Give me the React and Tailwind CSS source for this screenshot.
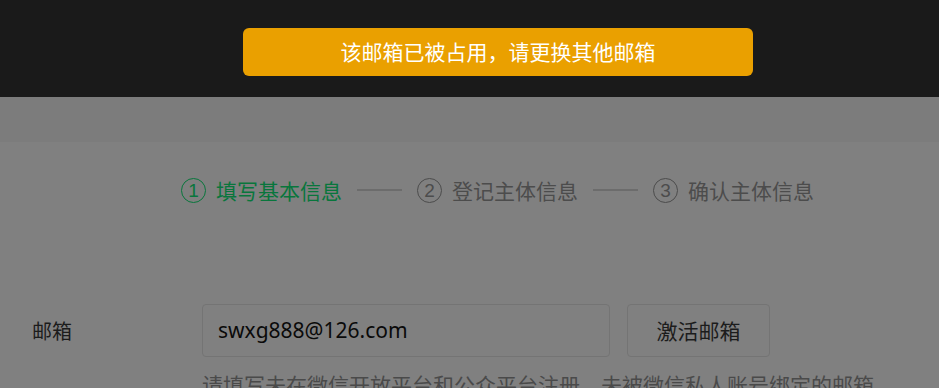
import React from "react";

const cjk = { fontFamily: '"Noto Sans CJK SC", "Noto Sans", sans-serif' };

function Step({ n, label, active }) {
  const color = active ? "text-[#08763c]" : "text-[#4c4c4c]";
  const border = active ? "border-[#08763c]" : "border-[#4c4c4c]";
  return (
    <div className={`flex items-center gap-[10px] ${color}`}>
      <div className={`w-[25px] h-[25px] rounded-full border ${border} flex items-center justify-center text-[19px] leading-none`} style={{ fontFamily: '"Liberation Sans", sans-serif' }}>
        {n}
      </div>
      <span className="text-[21px] leading-none">{label}</span>
    </div>
  );
}

function Line() {
  return <div className="w-[45px] h-[2px] bg-[#6c6c6c] mx-[15px]" />;
}

export default function App() {
  return (
    <div className="relative w-[939px] h-[388px] overflow-hidden bg-[#808080]" style={cjk}>
      <div className="h-[97px] bg-[#1a1a1a]" />
      <div className="h-[45px] bg-[#7c7c7c]" />
      <div className="pt-[18px] pl-[181px] flex items-center h-[60px] box-content">
        <Step n="1" label="填写基本信息" active />
        <Line />
        <Step n="2" label="登记主体信息" />
        <Line />
        <Step n="3" label="确认主体信息" />
      </div>
      <div className="mt-[84px] flex items-start">
        <div className="w-[202px] pl-[32px] h-[53px] flex items-center text-[20px] text-[#1c1c1c]">邮箱</div>
        <div>
          <div className="flex gap-[17px]">
            <div className="w-[408px] h-[53px] rounded-[4px] border border-[#747474] flex items-center pl-[15px] text-[21px] text-[#0a0a0a]" style={{ fontFamily: '"Noto Sans", sans-serif' }}>
              swxg888@126.com
            </div>
            <div className="w-[143px] h-[53px] rounded-[4px] border border-[#747474] flex items-center justify-center text-[21px] text-[#1c1c1c]">
              激活邮箱
            </div>
          </div>
          <div className="mt-[17px] text-[21px] leading-none whitespace-nowrap text-[#4a4a4a]">
            请填写未在微信开放平台和公众平台注册，未被微信私人账号绑定的邮箱
          </div>
        </div>
      </div>
      <div className="absolute left-[243px] top-[28px] w-[510px] h-[48px] rounded-[6px] bg-[#eaa000] flex items-center justify-center text-white text-[21px]">
        该邮箱已被占用，请更换其他邮箱
      </div>
    </div>
  );
}
